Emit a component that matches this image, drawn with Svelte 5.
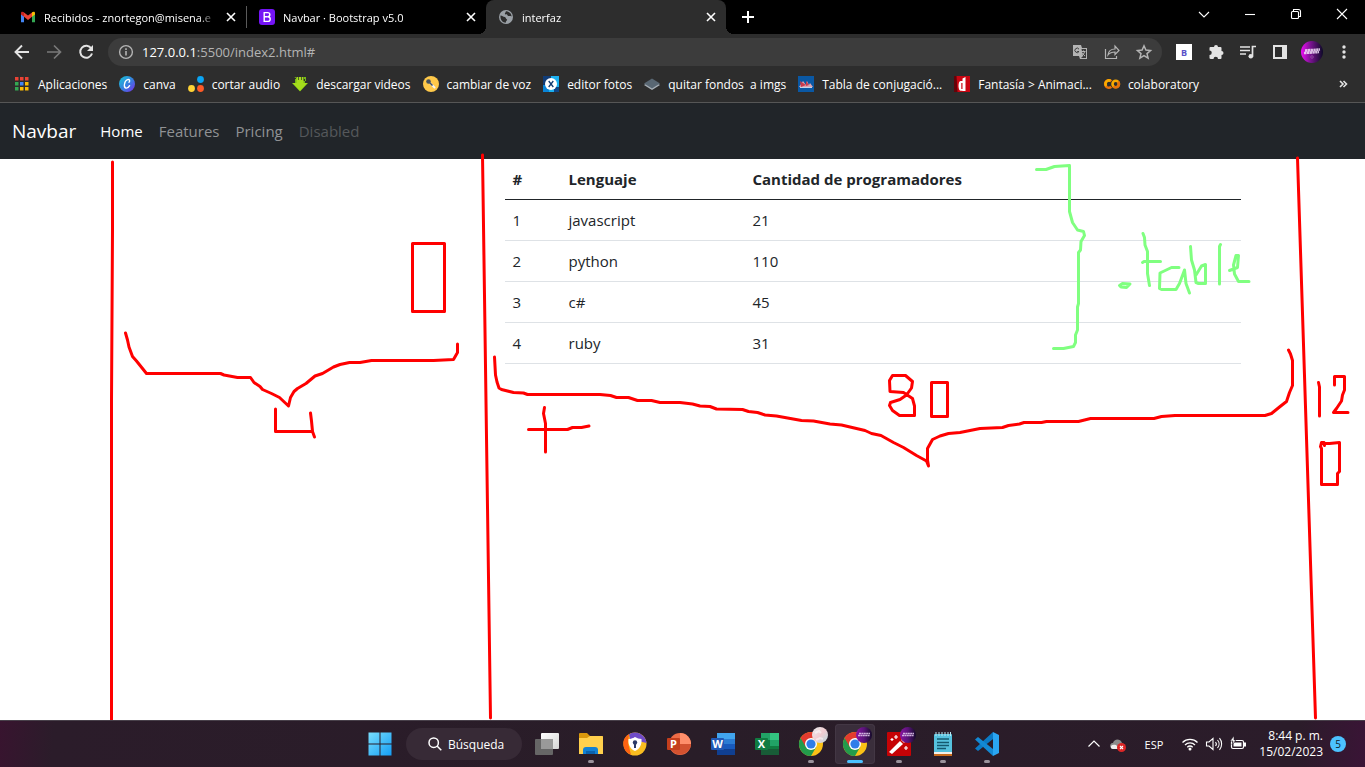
<script>
  const tabs = [
    { title: 'Recibidos - znortegon@misena.e', icon: 'gmail', active: false },
    { title: 'Navbar · Bootstrap v5.0', icon: 'bootstrap', active: false },
    { title: 'interfaz', icon: 'globe', active: true },
  ];

  const bookmarks = [
    { label: 'Aplicaciones', icon: 'apps' },
    { label: 'canva', icon: 'canva' },
    { label: 'cortar audio', icon: 'dots' },
    { label: 'descargar videos', icon: 'download' },
    { label: 'cambiar de voz', icon: 'mic' },
    { label: 'editor fotos', icon: 'pixlr' },
    { label: 'quitar fondos\u00a0 a imgs', icon: 'layers' },
    { label: 'Tabla de conjugació...', icon: 'verbs' },
    { label: 'Fantasía > Animaci...', icon: 'movies' },
    { label: 'colaboratory', icon: 'colab' },
  ];

  const nav = [
    { label: 'Home', state: 'current' },
    { label: 'Features', state: '' },
    { label: 'Pricing', state: '' },
    { label: 'Disabled', state: 'disabled' },
  ];

  const rows = [
    [1, 'javascript', 21],
    [2, 'python', 110],
    [3, 'c#', 45],
    [4, 'ruby', 31],
  ];

  const apps = [
    { name: 'Vista de tareas', icon: 'taskview', run: '' },
    { name: 'Explorador de archivos', icon: 'folder', run: 'open' },
    { name: 'Navegador privado', icon: 'shield', run: '' },
    { name: 'PowerPoint', icon: 'powerpoint', run: '' },
    { name: 'Word', icon: 'word', run: '' },
    { name: 'Excel', icon: 'excel', run: '' },
    { name: 'Chrome', icon: 'chrome-light', run: 'open' },
    { name: 'Chrome, perfil 2', icon: 'chrome-dark', run: 'focused' },
    { name: 'Varita', icon: 'wand', run: 'open' },
    { name: 'Bloc de notas', icon: 'notepad', run: 'open' },
    { name: 'Visual Studio Code', icon: 'vscode', run: 'open' },
  ];

  const redInk = [
    '112.5,162 112.5,230 111.5,400 111.5,720',
    '482.5,155 490.5,718',
    '1297.5,158 1308.5,500 1315.5,718',
    '412.5,243.5 444.5,243.5 444.5,311.5 412.5,311.5 412.5,243.5',
    '125.5,333 127.5,340 129,347 132.5,356.5 136.5,361 146.5,373.5 220.5,373.5 224,375 237.5,377.5 250.5,377.5 254,382.5 260,386.5 262.5,389.5 271.5,393.5 279.5,397.5 288.5,406 290.5,397.5 294,391.5 297.5,388.5 306,383.5 315,376 322.5,373.5 333.5,367 340,364.5 349.5,362.5 360,362.5 371.5,360.5 433.5,360.5 453.5,359.5 457.5,352.5 457.5,344',
    '275.5,409 275.5,431.5 311.5,431.5',
    '310.5,413 311.5,421 312.5,431.5 314.5,437',
    '494.5,357 495.5,375 497,382 499,388 501.5,389.5 513.5,392.5 523.5,393 527.5,394.5 600,394.5 610.5,395.5 616.5,397.5 628.5,397.5 637.5,400.5 651.5,400.5 660,402.5 680,402.5 692.5,404 700,406 710,406.5 716.5,409 742.5,409.5 748.5,411.5 757.5,412.5 765,415 776.5,416 801.5,420.5 813.5,421 830,424 841.5,425 865,430.5 871.5,433.5 881,435.5 893.5,442.5 903.5,447.5 916.5,455.5 926.5,461 928.5,466 927.5,460 927.5,448.5 932.5,439.5 940,436 948.5,433.5 960,432.5 980,428.5 1002.5,427.5 1008.5,425.5 1019.5,424 1024,422.5 1041.5,422.5 1046.5,421.5 1078.5,421.5 1090.5,418.5 1154,418.5 1161.5,416.5 1175,415.5 1265,415.5 1271.5,413.5 1279.5,407 1286.5,401.5 1289.5,392.5 1292.5,385.5 1292.5,360.5 1290.5,354 1288.5,350',
    '528.5,429.5 567.5,429.5 572.5,427.5 581.5,427.5 589,426',
    '544.5,407.5 543.5,413.5 545.5,423.5 545.5,452',
    '906.5,394.5 903.5,392.5 890,391.5 889.5,380.5 892.5,375.5 905.5,375.5 912.5,381.5 911.5,388 906.5,395 900,399.5 890.5,402.5 889.5,405.5 892.5,410.5 899.5,415.5 914.5,415.5 914.5,406 912.5,398.5 906.5,394.5',
    '931.5,382.5 947.5,382.5 947.5,416.5 931.5,416.5 931.5,382.5',
    '1318.5,382.5 1319.5,387 1319.5,416',
    '1334.5,385 1334.5,376.5 1344.5,376.5 1344.5,390 1342.5,395 1341.5,401 1336.5,408.5 1333.5,412.5 1348,412.5',
    '1324.5,445.5 1324,442.5 1321.5,442.5 1320.5,446.5 1321.5,448.5 1321.5,484.5 1337.5,484.5 1337.5,473.5 1339.5,471.5 1339.5,442.5 1329.5,443.5 1323.5,443.5',
  ];

  const greenInk = [
    '1036.5,169.5 1046,169.5 1054.5,166.5 1069.5,165.5 1069.5,211.5 1072.5,222.5 1077.5,230 1083.5,231.5 1084.5,235.5 1081,241.5 1080.5,250 1078.5,252.5 1078.5,303.5 1077.5,307 1077.5,330 1075.5,335 1075.5,342.5 1073.5,346.5 1063.5,348.5 1053.5,348.5',
    '1119.5,285.5 1122.5,283.5 1130,284 1126.5,287.5 1121,287 1119.5,285.5',
    '1143,233.5 1144.5,237.5 1145,245 1147.5,251.5 1147.5,273.5 1149.5,285.5',
    '1142.5,262.5 1144,261.5 1160.5,261.5',
    '1179,267.5 1171.5,267.5 1160,273 1159.5,288.5 1161.5,289.5 1176,289.5 1179.5,283.5 1184.5,270 1186,283.5 1189.5,293',
    '1190.5,246.5 1191.5,260 1194.5,270 1196,282.5 1198.5,283.5 1205.5,283.5 1205.5,264.5 1201.5,266 1196,275',
    '1220.5,244.5 1219.5,246.5 1219.5,284',
    '1229.5,270.5 1237.5,267.5 1238.5,255.5 1236,255.5 1233.5,265 1234.5,274 1238.5,281.5 1249,281.5',
  ];
</script>

{#snippet small(name)}
  <svg class="fav" viewBox="0 0 16 16" aria-hidden="true">
    {#if name === 'gmail'}
      <path d="M1 4v9.2h3V7z" fill="#4285f4" />
      <path d="M15 4v9.2h-3V7z" fill="#34a853" />
      <path d="M4 3.5v4.3L8 11l4-3.2V3.5L8 6.6z" fill="#ea4335" />
      <path d="M1 4.2C1 2.3 2.8 2.3 4 3.3v4.5L1 5.5z" fill="#c5221f" />
      <path d="M15 4.2c0-1.900-1.800-1.900-3-.9v4.500l3-2.300z" fill="#fbbc04" />
    {:else if name === 'bootstrap'}
      <rect width="16" height="16" rx="3" fill="#7414f5" />
      <path d="M5.200 3.600h3.400c3 0 2.900 3.900.3 4.200 3.200.3 3 4.600-.2 4.600H5.200zM5.200 7.800h3.500" fill="none" stroke="#fff" stroke-width="1.400" />
    {:else if name === 'globe'}
      <circle cx="8" cy="8" r="7" fill="#9aa0a6" />
      <path d="M2.500 6.500c2 .2 2.500 1.500 4.300 1.600 1.400.4.700 2 2.400 2.400-.2 1.400-1.500 1.400-1.400 3.300C4.500 13.600 2 10.500 2.500 6.500zM7.700 2.300c.6 1.300-1 1.300-.8 2.600 1 .9 2.500-.2 2.700 1.600.8 1 2.400-.1 4 1C13.600 4.500 11 2.300 7.700 2.300z" fill="#2d2d2d" />
    {:else if name === 'apps'}
      {#each ['#ea4335', '#ea4335', '#ea4335', '#34a853', '#4285f4', '#fbbc04', '#34a853', '#fbbc04', '#fbbc04'] as fill, i}
        <rect x={1 + (i % 3) * 5} y={1 + Math.floor(i / 3) * 5} width="3.500" height="3.500" {fill} />
      {/each}
    {:else if name === 'canva'}
      <defs><linearGradient id="cv" x1="0" y1="0" x2="1" y2="1"><stop stop-color="#16c8d5" /><stop offset=".55" stop-color="#3a7be0" /><stop offset="1" stop-color="#7d2ae8" /></linearGradient></defs>
      <circle cx="8" cy="8" r="8" fill="url(#cv)" />
      <path d="M10 6.200c1.500-1.500.4-3.300-1.500-2.500C5.300 4.800 4.200 11.400 6.800 12c1.600.3 3-.9 3.800-2.400" fill="none" stroke="#fff" stroke-width="1.300" stroke-linecap="round" />
    {:else if name === 'dots'}
      <circle cx="12.500" cy="3.500" r="3.400" fill="#0aa5f5" />
      <circle cx="3.500" cy="12.500" r="3.400" fill="#ffd335" />
      <circle cx="12.500" cy="12.500" r="3.400" fill="#ff5a26" />
    {:else if name === 'download'}
      <path d="M2 1h2v2H3v4H0l8 8.500L16 7h-3V3h-1V1h2v4h-2" fill="#74b816" />
      <path d="M4.500 1h7v6h4L8 15 .5 7h4z" fill="#a5dc1c" />
      <path d="M6.500 0v4M9.500 0v4" stroke="#2d2d2d" stroke-width=".7" />
    {:else if name === 'mic'}
      <circle cx="8" cy="8" r="8" fill="#ffc94a" />
      <path d="M6 6l5.500 5.500" stroke="#f4f4f4" stroke-width="2" stroke-linecap="round" />
      <circle cx="5.500" cy="5.500" r="2.300" fill="#45525e" />
      <path d="M6 6l3.500 3.500" stroke="#45525e" stroke-width="1.600" />
    {:else if name === 'pixlr'}
      <path d="M0 0h16v16H0z" fill="#1cb0f0" /><path d="M0 0h8v5H5v11H0z" fill="#103c77" /><path d="M0 9h6v7H0z" fill="#0984d8" /><path d="M11 11h5v5h-5z" fill="#0e4586" />
      <circle cx="8" cy="8" r="6" fill="#fff" /><path d="M5.700 5l4.600 6M10.300 5l-4.600 6" stroke="#123c72" stroke-width="1.300" />
    {:else if name === 'layers'}
      <path d="M0 9l8-5 8 5-8 5z" fill="#a9b1b8" /><path d="M0 7.500l8-5 8 5-8 5z" fill="#596773" />
    {:else if name === 'verbs'}
      <rect width="16" height="16" fill="#0a58a4" />
      <path d="M1 11l4-6 3 4 1-4 2 4 1-2 3 4z" fill="#dba3b1" /><path d="M2 5l6 4-5 2zM8 5l3 4-3 1z" fill="#c93a4c" /><path d="M2 11.500h12" stroke="#c4d4ea" />
    {:else if name === 'movies'}
      <rect width="16" height="16" fill="#c90612" /><path d="M0 0h2.500l1 16H0z" fill="#650208" />
      <path d="M11.500 1l-3 1.500V5H6.500C3.800 5.300 4 14.500 6.500 14.700H8.500v.3h3zM7.300 7h1.200v6H7.300z" fill="#fff" fill-rule="evenodd" />
    {:else if name === 'colab'}
      <g fill="none" stroke-width="2.600"><path d="M7.300 5.200a3.700 3.700 0 1 0 0 5.600" stroke="#e8710a" /><circle cx="11.700" cy="8" r="3.200" stroke="#f9ab00" /><path d="M9.400 10.300a3.200 3.200 0 0 0 4.600-4.600" stroke="#e8710a" /><path d="M6.500 4.700a3.500 3.500 0 0 0-4.300 5.200" stroke="#f9ab00" /></g>
    {/if}
  </svg>
{/snippet}

{#snippet cross()}
  <svg class="cross" viewBox="0 0 10 10" aria-hidden="true"><path d="M1 1l8 8M9 1l-8 8" /></svg>
{/snippet}

{#snippet disc()}
  <circle cx="21" cy="3" r="8" fill="url(#pf)" />
  <path d="M15 3.500h12M16 1.500h11" stroke="#e5cdf0" stroke-width="1.600" stroke-dasharray="2 .4" opacity=".85" />
{/snippet}

{#snippet chrome()}
  <circle cx="12" cy="12" r="12" fill="#fbc116" />
  <path d="M1.600 6A12 12 0 0 0 12 24l5.200-9L12 12z" fill="#239b4b" />
  <path d="M1.600 6l5.200 9L12 12V6h10.400A12 12 0 0 0 1.600 6z" fill="#e33b2e" />
  <circle cx="12" cy="12" r="6" fill="#fff" /><circle cx="12" cy="12" r="4.600" fill="#2f7de9" />
{/snippet}

{#snippet large(name)}
  <svg class="appicon" viewBox="0 0 24 24" aria-hidden="true">
    {#if name === 'taskview'}
      <defs><linearGradient id="tv" x1="0" x2="1" y2="1"><stop stop-color="#fff" /><stop offset="1" stop-color="#d5d5d5" /></linearGradient><linearGradient id="tg" x2="0" y2="1"><stop stop-color="#999" /><stop offset="1" stop-color="#5c5c5c" /></linearGradient></defs>
      <rect x="6" y="1" width="18" height="16" rx="1" fill="url(#tv)" /><rect x="0" y="7" width="18" height="16" rx="1" fill="#666" /><rect x="6" y="7" width="12" height="10" fill="#999" />
    {:else if name === 'folder'}
      <path d="M0 2q0-1 1-1h7l3 3h12q1 0 1 1v6H0z" fill="#d9980c" /><path d="M0 6h8l3-2h12q1 0 1 1v17H0z" fill="#ffd04d" /><path d="M4 22v-4q0-3 3-3h9q3 0 3 3v4z" fill="#1281d4" /><path d="M7 19h9v3H7z" fill="#0a62ad" />
    {:else if name === 'shield'}
      <circle cx="12" cy="12" r="11.500" fill="#f9bd20" /><path d="M6 2A11.500 11.500 0 0 0 8 22.800L5 11z" fill="#fb6313" /><path d="M6 2.200A11.500 11.500 0 0 1 23.500 11l-4-1L7 7z" fill="#704bc7" /><path d="M12 5q3 2 6.500 2c.5 6-2 10-6.500 12C7.500 17 5 13 5.500 7 9 7 12 5 12 5z" fill="#fff" /><circle cx="12" cy="10.500" r="2.200" fill="#2b3a68" /><path d="M12 11v5" stroke="#2b3a68" stroke-width="2" />
    {:else if name === 'powerpoint'}
      <circle cx="13" cy="12" r="11" fill="#ed6c47" /><path d="M13 1a11 11 0 0 1 11 11H13z" fill="#ff8f6b" /><path d="M24 12a11 11 0 0 1-21 4l10-4z" fill="#d35230" /><rect x="0" y="6" width="13" height="12" rx="1" fill="#c43e1c" /><text x="6.500" y="16" text-anchor="middle">P</text>
    {:else if name === 'word'}
      <rect x="6" y="1" width="18" height="22" rx="1" fill="#185abd" /><path d="M6 1h18v6H6z" fill="#41a5ee" /><path d="M6 7h18v5H6z" fill="#2b7cd3" /><path d="M6 17h18v6H6z" fill="#103f91" /><rect x="0" y="6" width="13" height="12" rx="1" fill="#2159b5" /><text x="6.500" y="16" text-anchor="middle">W</text>
    {:else if name === 'excel'}
      <rect x="6" y="1" width="18" height="22" rx="1" fill="#107c41" /><path d="M6 1h9v7H6z" fill="#21a366" /><path d="M15 1h9v7h-9z" fill="#33c481" /><path d="M15 8h9v6h-9z" fill="#21a366" /><path d="M6 17h18v6H6z" fill="#185c37" /><rect x="0" y="6" width="13" height="12" rx="1" fill="#107c41" /><text x="6.500" y="16" text-anchor="middle">X</text>
    {:else if name === 'chrome-light'}
      <defs><linearGradient id="op" x1="0" x2="1" y2="1"><stop stop-color="#e9eef0" /><stop offset=".5" stop-color="#f2cdd2" /><stop offset="1" stop-color="#b9dbe0" /></linearGradient></defs>
      {@render chrome()}<circle cx="21" cy="3" r="8" fill="url(#op)" /><path d="M16 1l4-2 2 2M17 8l4-2 3 1" stroke="#fff" stroke-width="2" fill="none" opacity=".5" />
    {:else if name === 'chrome-dark'}
      {@render chrome()}{@render disc()}
    {:else if name === 'wand'}
      <rect width="24" height="24" rx="1" fill="#c60306" /><path d="M2 20L13 9l3 3L5 22z" fill="#fff" /><path d="M14 8l2-2 3 3-2 2z" fill="#f3c9cb" /><path d="M9 3v4M7 5h4M5 6v3M3.500 7.500h3M19 14v4M17 16h4" stroke="#fff" stroke-width="1.200" />{@render disc()}
    {:else if name === 'notepad'}
      <rect x="3" y="2" width="18" height="21" rx="1" fill="#56c2de" /><path d="M3 20h18v3H3z" fill="#f3eee7" /><path d="M3 22h18v2H3z" fill="#c96a1b" /><path d="M5 0v4M8 0v4M11 0v4M14 0v4M17 0v4M19.500 0v4" stroke="#b9e8f3" stroke-width="1" /><path d="M6 7h12M6 10.500h12M6 13.500h12M6 16.500h9" stroke="#14596f" stroke-width="1.400" />
    {:else if name === 'vscode'}
      <path d="M18 17v-10L3 19l-3-2.500L18 0z" fill="#0b7ac4" /><path d="M18 24L0 7.500 3 5l15 12z" fill="#1389d4" /><path d="M18 0l6 3v18l-6 3z" fill="#2aa6f2" />
    {/if}
  </svg>
{/snippet}

<div class="screen">
  <svg class="shared" aria-hidden="true"><defs><linearGradient id="pf"><stop stop-color="#8a13a4" /><stop offset=".5" stop-color="#5a1479" /><stop offset="1" stop-color="#140a29" /></linearGradient></defs></svg>

  <header class="browser">
    <div class="tabstrip">
      {#each tabs as tab}
        <div class="tab" class:active={tab.active}>
          {@render small(tab.icon)}
          <span class="title">{tab.title}</span>
          <button aria-label="Cerrar pestaña">{@render cross()}</button>
        </div>
      {/each}
      <button class="new" aria-label="Nueva pestaña"><svg viewBox="0 0 12 12"><path d="M6 0v12M0 6h12" /></svg></button>
      <div class="window">
        <button aria-label="Buscar pestañas"><svg viewBox="0 0 12 12"><path d="M1 4l5 5 5-5" /></svg></button>
        <button aria-label="Minimizar"><svg viewBox="0 0 12 12"><path d="M1 6.500h10" /></svg></button>
        <button aria-label="Restaurar"><svg viewBox="0 0 12 12"><rect x="1.500" y="3.500" width="7" height="7" rx="1" /><path d="M3.500 3V1.500h5q2 0 2 2v5H9" /></svg></button>
        <button aria-label="Cerrar"><svg viewBox="0 0 12 12"><path d="M1 1l10 10M11 1L1 11" /></svg></button>
      </div>
    </div>

    <div class="toolbar">
      <button aria-label="Atrás"><svg viewBox="0 0 16 16"><path d="M15 8H2M8 1.500L1.500 8 8 14.500" stroke-width="1.900" /></svg></button>
      <button class="dim" aria-label="Adelante"><svg viewBox="0 0 16 16"><path d="M1 8h13M8 1.500L14.500 8 8 14.500" stroke-width="1.700" /></svg></button>
      <button aria-label="Recargar"><svg viewBox="0 0 16 16"><path d="M13.300 4.500A6 6 0 1 0 14 9.500" stroke-width="2" /><path d="M15 1v6H9z" class="solid" /></svg></button>
      <div class="address">
        <svg viewBox="0 0 16 16"><circle cx="8" cy="8" r="6.400" stroke-width="1.400" /><path d="M8 7v4.500M8 4.300v1.600" stroke-width="1.600" /></svg>
        <a href="#top"><b>127.0.0.1</b>:5500/index2.html#</a>
        <div class="actions">
          <button aria-label="Traducir"><svg viewBox="0 0 16 16"><path d="M1 1h8l1 3h5v11H8l-1-3H1z" class="solid" /><path d="M9.500 5H14v9H9l2-2z" fill="#3c3c3c" stroke="none" /><path d="M7 5.200A2.200 2.200 0 1 0 7 7.500H5.200" stroke="#3c3c3c" /><path d="M9.500 7.500h4M11.500 6.500v1M12.500 8q-1 3-2.500 4M10.500 9q1 2 2.500 3" stroke-width="1" /></svg></button>
          <button aria-label="Compartir"><svg viewBox="0 0 16 16"><path d="M1.500 5v9.500h11V12M4 11c.5-4 3-6 7-6V2l4 4.500-4 4V8C8 8 6 8.500 4 11z" stroke-width="1.200" /></svg></button>
          <button aria-label="Marcar"><svg viewBox="0 0 16 16"><path d="M8 1.800l1.900 4.300 4.600.4L11 9.600l1.100 4.600L8 11.700l-4.100 2.500L5 9.600 1.500 6.500l4.600-.4z" stroke-width="1.500" /></svg></button>
        </div>
      </div>
      <button class="ext" aria-label="Extensión B"><span>B</span></button>
      <button aria-label="Extensiones"><svg viewBox="0 0 16 16"><path class="solid" d="M6 3a2 2 0 0 1 4 0h2.500q1 0 1 1v3a2 2 0 0 1 0 4v3q0 1-1 1H10a2 2 0 0 0-4.500 0H3q-1.500 0-1.500-1v-3a2.100 2.100 0 0 0 0-4.500V4q0-1 1-1z" /></svg></button>
      <button aria-label="Control multimedia"><svg viewBox="0 0 16 16"><path d="M0 3h10M0 6.500h10M0 10h6M12.500 12.500V2.500H16" stroke-width="1.700" /><circle cx="10.800" cy="12.300" r="2.300" class="solid" /></svg></button>
      <button aria-label="Panel lateral"><svg viewBox="0 0 16 16"><path class="solid" fill-rule="evenodd" d="M1 1h14v14H1zM3 3v10h7V3z" /></svg></button>
      <button aria-label="Perfil"><svg class="avatar" viewBox="0 0 22 22"><defs><linearGradient id="me"><stop stop-color="#ed0cf5" /><stop offset=".45" stop-color="#76138d" /><stop offset="1" stop-color="#0d0a28" /></linearGradient></defs><circle cx="11" cy="11" r="11" fill="url(#me)" stroke="none" /><path d="M3 12l15-1M4 9.500l15-1" stroke="#f1dff8" stroke-width="2.600" stroke-dasharray="2.400 .4" opacity=".85" /><circle cx="11" cy="16" r="1.300" stroke="#9a55aa" stroke-width=".7" /></svg></button>
      <button aria-label="Menú"><svg viewBox="0 0 16 16"><g class="solid"><circle cx="8" cy="3" r="1.700" /><circle cx="8" cy="8" r="1.700" /><circle cx="8" cy="13" r="1.700" /></g></svg></button>
    </div>

    <nav class="bookmarks" aria-label="Marcadores">
      {#each bookmarks as mark}
        <a href="#top">{@render small(mark.icon)}<span>{mark.label}</span></a>
      {/each}
      <button aria-label="Más marcadores"><svg viewBox="0 0 8 8"><path d="M1 1l3 3-3 3M4.500 1l3 3-3 3" /></svg></button>
    </nav>
  </header>

  <main id="top">
    <nav class="navbar">
      <a class="brand" href="#top">Navbar</a>
      {#each nav as item}
        <a href="#top" class={item.state}>{item.label}</a>
      {/each}
    </nav>
    <div class="container">
      <table>
        <colgroup><col class="c1" /><col class="c2" /><col /></colgroup>
        <thead><tr><th>#</th><th>Lenguaje</th><th>Cantidad de programadores</th></tr></thead>
        <tbody>
          {#each rows as row}
            <tr>{#each row as cell}<td>{cell}</td>{/each}</tr>
          {/each}
        </tbody>
      </table>
    </div>
  </main>

  <svg class="ink" viewBox="0 0 1365 767" preserveAspectRatio="none" aria-hidden="true">
    <g stroke="#ff0000">{#each redInk as points}<polyline {points} />{/each}</g>
    <g stroke="#80ff80">{#each greenInk as points}<polyline {points} />{/each}</g>
  </svg>

  <footer class="taskbar">
    <div class="dock">
      <button class="app" aria-label="Inicio">
        <svg class="appicon" viewBox="0 0 24 24"><defs><linearGradient id="wn" x1="0" y1="0" x2="24" y2="24" gradientUnits="userSpaceOnUse"><stop stop-color="#7be0fd" /><stop offset="1" stop-color="#129cf5" /></linearGradient></defs><path d="M.5.5h11v11H.5zM12.500.5h11v11h-11zM.5 12.500h11v11H.5zM12.500 12.500h11v11h-11z" fill="url(#wn)" /></svg>
      </button>
      <button class="search">
        <svg viewBox="0 0 14 14"><circle cx="5.700" cy="5.700" r="4.700" /><path d="M9 9l4.300 4.300" /></svg>
        Búsqueda
      </button>
      {#each apps as app}
        <button class="app {app.run}" aria-label={app.name}>{@render large(app.icon)}</button>
      {/each}
    </div>
    <div class="tray">
      <svg viewBox="0 0 16 16"><path d="M2.500 10.500L8 5l5.500 5.500" stroke-width="1.200" /></svg>
      <svg viewBox="0 0 16 16"><path d="M1 12c-2-3 0-5 2-5 1-4 7-5 9 0l3 2v4H2z" fill="#8b8b8b" stroke="none" /><path d="M1 12c-1-3 2-4 5-3l4 4H3q-1 0-2-1z" fill="#eee" stroke="none" /><circle cx="11.500" cy="11.500" r="4.500" fill="#dc2626" stroke="none" /><path d="M10 10l3 3M13 10l-3 3" stroke-width="1.100" /></svg>
      <span class="lang">ESP</span>
      <div class="status">
        <svg viewBox="0 0 16 16"><path d="M.5 6.500a10.600 10.600 0 0 1 15 0M3 9a7 7 0 0 1 10 0M5.300 11.200a4 4 0 0 1 5.400 0" stroke-width="1.300" /><circle cx="8" cy="13" r="1.500" fill="#fff" stroke="none" /></svg>
        <svg viewBox="0 0 16 16"><path d="M.5 6v4H3l4 3.500v-11L3 6zM9.500 6a3 3 0 0 1 0 4M11.500 4a6 6 0 0 1 0 8M13.500 2.200a9 9 0 0 1 0 11.600" stroke-width="1.100" /></svg>
        <svg viewBox="0 0 16 16"><rect x="1.500" y="4.500" width="12" height="8" rx="1.500" stroke-width="1.200" /><path d="M3.500 6.500h8v4h-8zM14 6.500h2v4h-2z" fill="#fff" stroke="none" /><path d="M4 0L0 5h3l-1 4 4-5H4z" fill="#fff" stroke="#291d2a" stroke-width=".6" /></svg>
      </div>
      <div class="clock"><span>8:44 p. m.</span><span>15/02/2023</span></div>
      <span class="count">5</span>
    </div>
  </footer>
</div>

<style>
  :global(body) { margin: 0; background: #fff; }
  .screen {
    position: relative;
    display: flex;
    flex-direction: column;
    min-height: 100vh;
    overflow: hidden;
    font-family: "Open Sans", "Noto Sans", sans-serif;
    font-size: 12px;
    color: #fff;
  }
  button { border: 0; padding: 0; background: none; color: inherit; font: inherit; display: grid; place-items: center; }
  a { color: inherit; text-decoration: none; }
  svg { display: block; flex: none; overflow: visible; }
  .shared { position: absolute; width: 0; height: 0; }
  .fav { width: 16px; height: 16px; }

  .browser { background: #2d2d2d; border-bottom: 1px solid #565656; }
  .tabstrip { display: flex; height: 34px; background: #000; }
  .tab {
    display: flex;
    align-items: center;
    gap: 8px;
    flex: 0 1 239px;
    min-width: 0;
    box-sizing: border-box;
    padding: 0 8px 0 12px;
    position: relative;
  }
  .tab:first-child { flex-basis: 247px; padding-left: 20px; border-right: 1px solid; border-image: linear-gradient(transparent 20%, #5a5a5a 20% 80%, transparent 80%) 1; }
  .tab .title { flex: 1; min-width: 0; overflow: hidden; white-space: nowrap; font-size: 11px; mask-image: linear-gradient(to right, #000 90%, transparent); }
  .tab button { width: 14px; height: 16px; }
  .active { background: #2d2d2d; border-radius: 8px 8px 0 0; flex-basis: 240px; }
  .active::before, .active::after { content: ""; position: absolute; bottom: 0; width: 8px; height: 8px; }
  .active::before { left: -8px; background: radial-gradient(circle at 0 0, #000 8px, #2d2d2d 8px); }
  .active::after { right: -8px; background: radial-gradient(circle at 100% 0, #000 8px, #2d2d2d 8px); }
  .cross { width: 10px; height: 10px; stroke: #fff; stroke-width: 1.6; }
  .new { width: 44px; }
  .new svg { width: 12px; height: 12px; stroke: #fff; stroke-width: 2; }
  .window { display: flex; margin-left: auto; height: 28px; }
  .window button { width: 46px; }
  .window svg { width: 12px; height: 12px; fill: none; stroke: #fff; stroke-width: 1.1; }

  .toolbar { display: flex; align-items: center; height: 36px; padding: 0 5px 0 6px; color: #e3e3e3; }
  .toolbar button { width: 32px; height: 28px; flex: none; }
  .toolbar svg { width: 16px; height: 16px; fill: none; stroke: currentColor; }
  .toolbar .solid { fill: currentColor; stroke: none; }
  .toolbar .dim { color: #797979; }
  .toolbar .avatar { width: 22px; height: 22px; }
  .address { flex: 1; display: flex; align-items: center; gap: 8px; height: 28px; margin: 0 6px; padding-left: 10px; padding-right: 2px; border-radius: 14px; background: #3c3c3c; color: #b4b4b4; font-size: 13px; min-width: 0; }
  .address b { color: #fff; font-weight: 400; }
  .address a { white-space: nowrap; }
  .actions { display: flex; margin-left: auto; }
  .ext span { display: grid; place-items: center; width: 16px; height: 16px; background: #fff; color: #5a50c8; font-size: 9px; font-weight: 700; }

  .bookmarks { display: flex; align-items: center; gap: 12px; height: 32px; padding: 0 18px 4px 14px; box-sizing: border-box; white-space: nowrap; }
  .bookmarks a { display: flex; align-items: center; gap: 8px; }
  .bookmarks button { margin-left: auto; }
  .bookmarks button svg { width: 8px; height: 8px; fill: none; stroke: #e3e3e3; stroke-width: 1.6; }

  main { flex: 1; background: #fff; color: #212529; font-size: 15px; line-height: 24px; }
  .navbar { display: flex; align-items: center; gap: 16px; height: 56px; padding: 0 12px; background: #212529; color: #909294; }
  .brand { font-size: 19px; color: #fff; margin-right: 8px; }
  .current { color: #fff; }
  .disabled { color: #55585b; }
  .container { display: grid; grid-template-columns: 4fr 8fr; max-width: 1140px; margin: 0 auto; }
  table { grid-column: 2; margin: 0 12px; border-collapse: collapse; table-layout: fixed; }
  .c1 { width: 56px; }
  .c2 { width: 184px; }
  th, td { padding: 8px; text-align: left; border-bottom: 1px solid #dee2e6; }
  th { border-color: #212529; }

  .ink { position: absolute; inset: 0; width: 100%; height: 100%; pointer-events: none; fill: none; stroke-width: 3; stroke-linecap: round; stroke-linejoin: round; }

  .taskbar {
    position: relative;
    display: grid;
    grid-template-columns: 1fr auto 1fr;
    align-items: center;
    height: 47px;
    box-sizing: border-box;
    border-top: 1px solid #48404a;
    background: linear-gradient(95deg, #38142f 0%, #2b1c2a 4%, #291d28 50%, #2b1c2a 95%, #3a1436 100%);
  }
  .dock { grid-column: 2; display: flex; align-items: center; padding-left: 2px; }
  .app { position: relative; width: 40px; height: 40px; margin: 0 2px; border-radius: 4px; }
  .appicon { width: 24px; height: 24px; }
  .appicon text { font: 700 11px "Open Sans", sans-serif; fill: #fff; }
  .search { display: flex; align-items: center; gap: 6px; width: 116px; height: 32px; margin: 0 3px 0 4px; padding-left: 22px; border-radius: 16px; background: #372a36; font-size: 12px; }
  .search svg { width: 14px; height: 14px; fill: none; stroke: #fff; stroke-width: 1.5; }
  .open::after, .focused::after { content: ""; position: absolute; bottom: 1px; left: 17px; width: 6px; height: 3px; border-radius: 2px; background: #9a929b; }
  .focused { background: #3a2e3b; box-shadow: inset 0 0 0 1px #433744; }
  .focused::after { left: 12px; width: 16px; background: #4cc2ff; }
  .tray { display: flex; align-items: center; justify-content: flex-end; padding-right: 19px; }
  .tray svg { width: 16px; height: 16px; margin: 0 4px; fill: none; stroke: #fff; }
  .lang { margin: 0 15px; font-size: 11px; }
  .status { display: flex; }
  .clock { display: grid; text-align: right; margin: 0 7px 0 9px; line-height: 16px; font-size: 12px; white-space: nowrap; }
  .count { display: grid; place-items: center; width: 16px; height: 16px; border-radius: 50%; background: #4cc2ff; color: #10202c; font-size: 10px; }
</style>
